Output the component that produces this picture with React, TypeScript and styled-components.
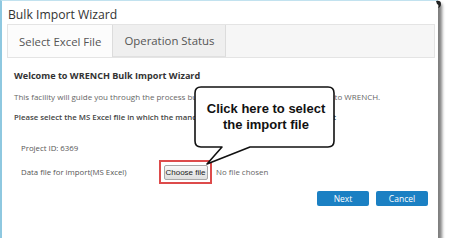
import React from "react";
import styled, { createGlobalStyle } from "styled-components";

const GlobalStyle = createGlobalStyle`
  html, body {
    margin: 0;
    padding: 0;
    background: #ffffff;
  }
  body {
    font-family: "Open Sans", "Liberation Sans", sans-serif;
  }
`;

const Card = styled.div`
  position: relative;
  box-sizing: border-box;
  width: 438px;
  height: 238px;
  padding: 4px 3px 0 5px;
  background: #ffffff;
  border-left: 2px solid #8ec8e0;
  border-top: 1px solid #c2e2ef;
  box-shadow: 4px 4px 3px rgba(0, 0, 0, 0.5);
`;

const Title = styled.div`
  font-size: 12.2px;
  line-height: 19px;
  color: #333;
  padding-left: 1px;
`;

const TabBar = styled.div`
  display: flex;
  height: 34px;
  box-sizing: border-box;
  border: 1px solid #e4e4e4;
  background: #f6f6f6;
`;

const Tab = styled.div<{ $active?: boolean }>`
  display: flex;
  align-items: center;
  padding: 0 11px;
  font-size: 11.4px;
  color: #555;
  background: ${(p) => (p.$active ? "#fcfcfc" : "#efefef")};
  border-right: 1px solid #dcdcdc;
  border-bottom: ${(p) => (p.$active ? "none" : "1px solid #e0e0e0")};
`;

const Content = styled.div`
  padding-left: 7px;
  color: #444;
`;

const Heading = styled.div`
  margin-top: 12px;
  font-size: 9.1px;
  line-height: 12px;
  font-weight: 700;
  color: #333;
`;

const Paragraph = styled.div<{ $strong?: boolean }>`
  margin-top: 10px;
  font-size: ${(p) => (p.$strong ? "7.8px" : "8px")};
  line-height: 10px;
  font-weight: ${(p) => (p.$strong ? 600 : 400)};
  color: ${(p) => (p.$strong ? "#444" : "#666")};
  white-space: nowrap;
`;

const Form = styled.div`
  display: flex;
  flex-direction: column;
  gap: 5px;
  margin-top: 19px;
  padding-left: 7px;
`;

const Row = styled.div`
  display: grid;
  grid-template-columns: 138px auto auto;
  align-items: center;
  justify-content: start;
  min-height: 14px;
  font-size: 7.8px;
  color: #555;
`;

const Highlight = styled.div`
  box-sizing: border-box;
  width: 53px;
  height: 24px;
  border: 2px solid #dd4b4b;
  display: flex;
  align-items: center;
  justify-content: center;
`;

const FileButton = styled.div`
  box-sizing: border-box;
  width: 44px;
  height: 15px;
  display: flex;
  align-items: center;
  justify-content: center;
  font-family: "Liberation Sans", Arial, sans-serif;
  font-size: 8px;
  color: #222;
  border: 1px solid #a8a8a8;
  border-radius: 2px;
  background: linear-gradient(#f8f8f8, #dedede);
`;

const NoFile = styled.span`
  margin-left: 4px;
  font-size: 7.9px;
  color: #666;
`;

const Actions = styled.div`
  display: flex;
  justify-content: flex-end;
  gap: 7px;
  margin-top: 7px;
  margin-right: 7px;
`;

const ActionButton = styled.div`
  width: 52px;
  height: 15px;
  display: flex;
  align-items: center;
  justify-content: center;
  background: #1b80c3;
  border-radius: 2px;
  color: #ffffff;
  font-size: 8.5px;
`;

const Callout = styled.div`
  position: absolute;
  left: 192px;
  top: 85px;
  width: 142px;
  height: 80px;
`;

const CalloutText = styled.div`
  position: absolute;
  left: 2px;
  top: 1px;
  width: 140px;
  height: 60px;
  display: flex;
  flex-direction: column;
  align-items: center;
  justify-content: center;
  font-family: "Liberation Sans", Arial, sans-serif;
  font-weight: 700;
  font-size: 13px;
  line-height: 16px;
  color: #111;
`;

const Curl = styled.svg`
  position: absolute;
  right: -5px;
  top: -1px;
`;

export default function App() {
  return (
    <>
      <GlobalStyle />
      <Card>
        <Title>Bulk Import Wizard</Title>
        <TabBar>
          <Tab $active>Select Excel File</Tab>
          <Tab>Operation Status</Tab>
        </TabBar>
        <Content>
          <Heading>Welcome to WRENCH Bulk Import Wizard</Heading>
          <Paragraph>
            This facility will guide you through the process bulk importing all of the project data in to WRENCH.
          </Paragraph>
          <Paragraph $strong>
            Please select the MS Excel file in which the mandatory data is filled out for this import
          </Paragraph>
          <Form>
            <Row>
              <span>Project ID: 6369</span>
            </Row>
            <Row>
              <span>Data file for import(MS Excel)</span>
              <Highlight>
                <FileButton>Choose file</FileButton>
              </Highlight>
              <NoFile>No file chosen</NoFile>
            </Row>
          </Form>
          <Actions>
            <ActionButton>Next</ActionButton>
            <ActionButton>Cancel</ActionButton>
          </Actions>
        </Content>

        <Callout>
          <svg width="142" height="80" viewBox="0 0 142 80">
            <path
              d="M7 1 H134 Q140 1 140 7 V55 Q140 61 134 61 H56 L13 78 L28 61 H7 Q1 61 1 55 V7 Q1 1 7 1 Z"
              fill="#ffffff"
              stroke="#111"
              strokeWidth="1.6"
              strokeLinejoin="round"
            />
          </svg>
          <CalloutText>
            <span>Click here to select</span>
            <span>the import file</span>
          </CalloutText>
        </Callout>

        <Curl width="8" height="10" viewBox="0 0 8 10">
          <path d="M1 1 Q6 0 6 4 Q6 7 3 8 Q5 5 2 4 Z" fill="#222" />
        </Curl>
      </Card>
    </>
  );
}
